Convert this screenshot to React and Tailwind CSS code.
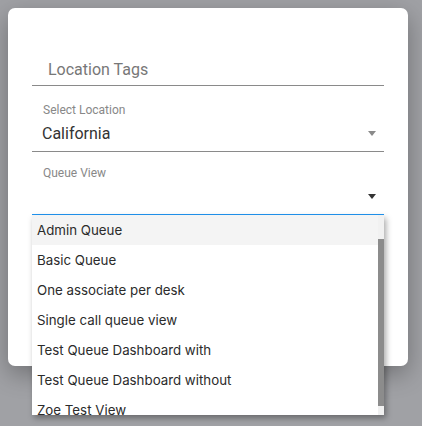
const queueViews = [
  'Admin Queue',
  'Basic Queue',
  'One associate per desk',
  'Single call queue view',
  'Test Queue Dashboard with',
  'Test Queue Dashboard without',
  'Zoe Test View',
];

function Caret({ color }) {
  return (
    <svg width="8" height="5" viewBox="0 0 8 5" className="shrink-0">
      <path d="M0 0 L8 0 L4 5 Z" fill={color} />
    </svg>
  );
}

export default function App() {
  return (
    <div className="w-[422px] h-[426px] overflow-hidden bg-[#a0a1a5] font-['Roboto',sans-serif]">
      <div className="ml-2 mt-2 w-[400px] h-[358px] bg-white rounded-[7px] shadow-[0_8px_24px_rgba(0,0,0,0.3)] px-6 pt-[45px]">
        {/* Location tags */}
        <div className="h-[33px] flex items-center border-b border-[#8a8a8a] pl-4">
          <span className="text-[16px] leading-[19px] text-[#777]">Location Tags</span>
        </div>

        {/* Select location */}
        <div className="pt-[17px] pb-[8px] border-b border-[#8a8a8a]">
          <div className="pl-[11px] text-[12px] leading-[14px] text-[#888]">Select Location</div>
          <div className="mt-[7px] h-[19px] pl-[10px] pr-2 flex items-center justify-between">
            <span className="text-[16px] leading-[19px] text-[#333]">California</span>
            <Caret color="#8a8a8a" />
          </div>
        </div>

        {/* Queue view */}
        <div className="relative">
          <div className="pt-[14px] pb-[6px] border-b border-[#2196f3]">
            <div className="pl-[11px] text-[12px] leading-[14px] text-[#888]">Queue View</div>
            <div className="mt-[4px] h-[24px] pr-2 flex items-center justify-end">
              <Caret color="#333" />
            </div>
          </div>

          {/* Dropdown menu */}
          <div className="absolute left-0 top-full w-[352px] h-[200px] bg-white flex overflow-hidden shadow-[2px_3px_6px_rgba(0,0,0,0.35)] font-['Inter',sans-serif]">
            <ul className="flex-1">
              {queueViews.map((v, i) => (
                <li
                  key={v}
                  className={`h-[30px] flex items-center pl-[5px] pt-[2px] text-[13.3px] text-[#2b2b2b] ${i === 0 ? 'bg-[#f4f4f4]' : ''}`}
                >
                  {v}
                </li>
              ))}
            </ul>
            <div className="w-[6px] bg-[#f1f1f1] pt-[24px] pb-[9px]">
              <div className="h-full bg-[#8c8c8c]"></div>
            </div>
          </div>
        </div>
      </div>
    </div>
  );
}
